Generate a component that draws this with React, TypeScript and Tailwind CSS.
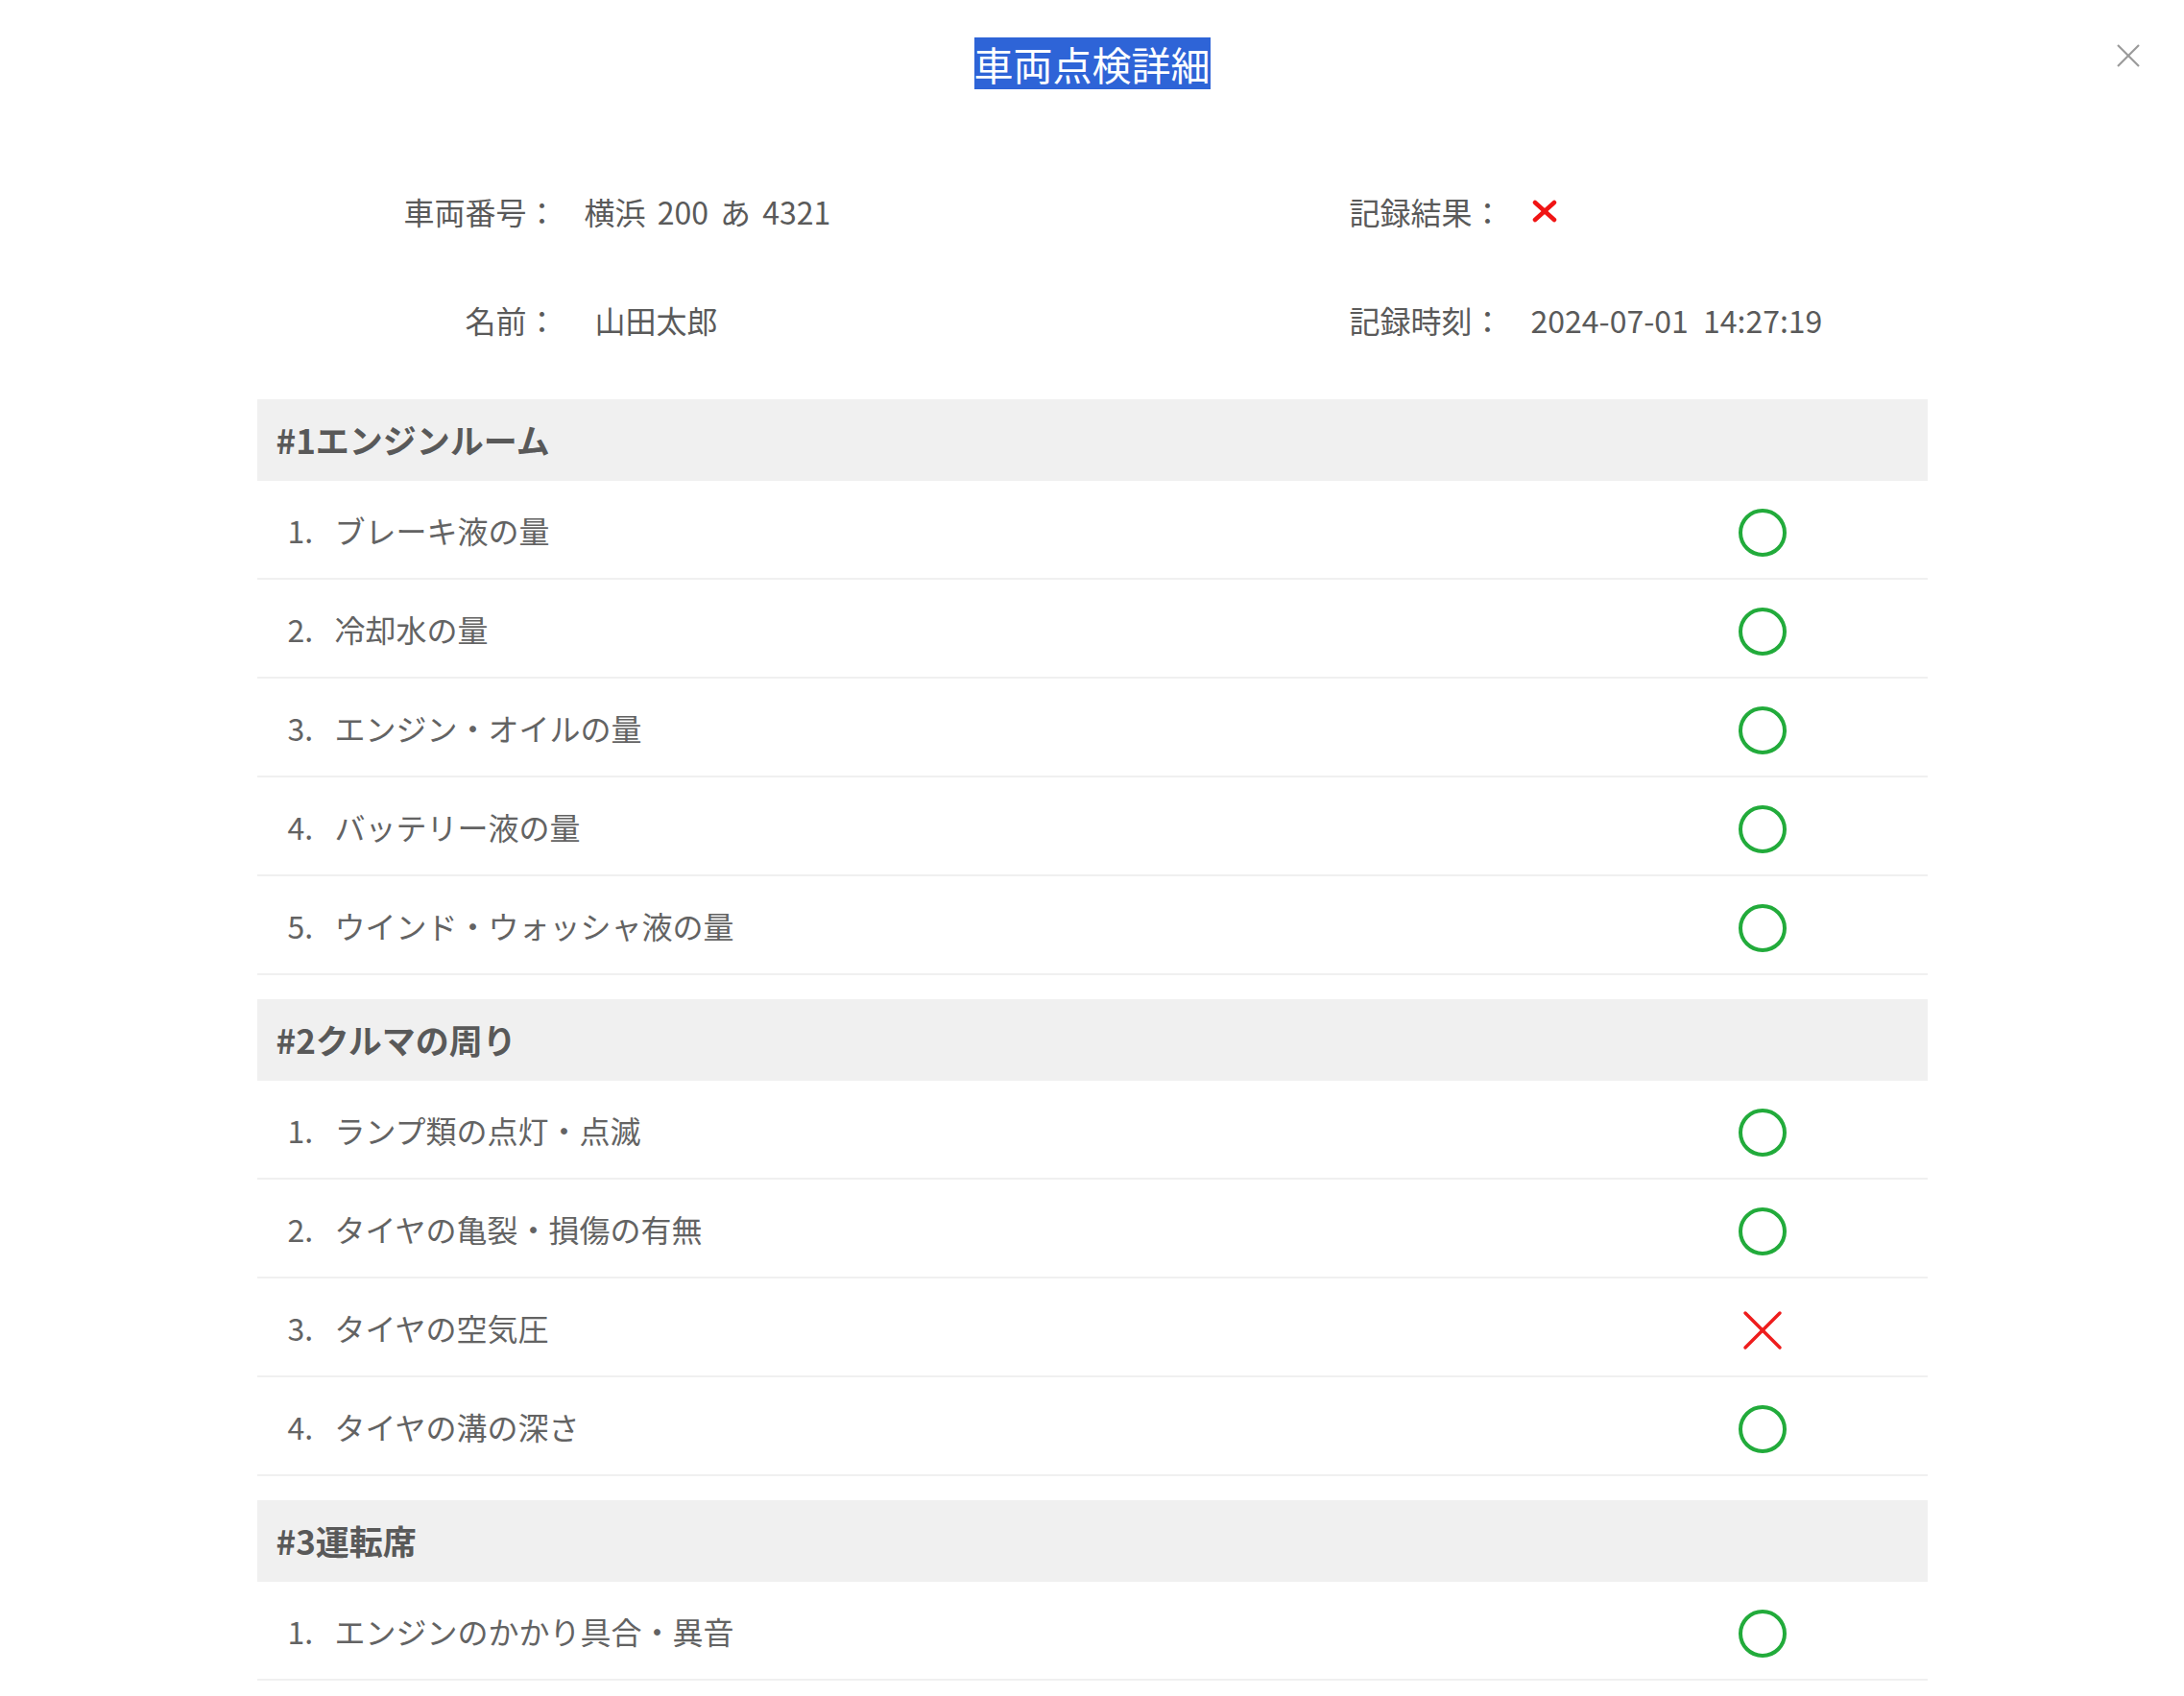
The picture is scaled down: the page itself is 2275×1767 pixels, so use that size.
import React from "react";

type CheckItem = {
  label: string;
  ok: boolean;
};

type Section = {
  title: string;
  items: CheckItem[];
};

const sections: Section[] = [
  {
    title: "#1エンジンルーム",
    items: [
      { label: "ブレーキ液の量", ok: true },
      { label: "冷却水の量", ok: true },
      { label: "エンジン・オイルの量", ok: true },
      { label: "バッテリー液の量", ok: true },
      { label: "ウインド・ウォッシャ液の量", ok: true },
    ],
  },
  {
    title: "#2クルマの周り",
    items: [
      { label: "ランプ類の点灯・点滅", ok: true },
      { label: "タイヤの亀裂・損傷の有無", ok: true },
      { label: "タイヤの空気圧", ok: false },
      { label: "タイヤの溝の深さ", ok: true },
    ],
  },
  {
    title: "#3運転席",
    items: [{ label: "エンジンのかかり具合・異音", ok: true }],
  },
];

const fontStack = { fontFamily: '"Noto Sans CJK JP", "Noto Sans", sans-serif' };

const OkMark = () => (
  <svg width="52" height="52" viewBox="0 0 52 52">
    <circle cx="26" cy="26" r="23" fill="none" stroke="#22ab3b" strokeWidth="4" />
  </svg>
);

const NgMark = () => (
  <svg width="42" height="42" viewBox="0 0 42 42">
    <line x1="3" y1="3" x2="39" y2="39" stroke="#ee1d1d" strokeWidth="3.5" strokeLinecap="round" />
    <line x1="39" y1="3" x2="3" y2="39" stroke="#ee1d1d" strokeWidth="3.5" strokeLinecap="round" />
  </svg>
);

const SmallNg = () => (
  <svg width="26" height="24" viewBox="0 0 26 24">
    <line x1="3" y1="3" x2="23" y2="21" stroke="#f01414" strokeWidth="4.5" strokeLinecap="round" />
    <line x1="23" y1="3" x2="3" y2="21" stroke="#f01414" strokeWidth="4.5" strokeLinecap="round" />
  </svg>
);

const CloseIcon = () => (
  <svg width="26" height="26" viewBox="0 0 26 26">
    <line x1="2" y1="2" x2="24" y2="24" stroke="#9a9a9a" strokeWidth="2.2" />
    <line x1="24" y1="2" x2="2" y2="24" stroke="#9a9a9a" strokeWidth="2.2" />
  </svg>
);

const InfoCell = ({
  label,
  labelWidth,
  children,
  offset,
}: {
  label: string;
  labelWidth: string;
  children: React.ReactNode;
  offset: string;
}) => (
  <div className="flex h-[113px] items-center">
    <span className={`${labelWidth} shrink-0 text-right`}>{label}</span>
    <span className={offset}>{children}</span>
  </div>
);

const SectionBlock = ({ section, first }: { section: Section; first: boolean }) => (
  <div className={first ? "" : "mt-[25px]"}>
    <div className="flex h-[85px] items-center bg-[#f0f0f0] pl-[20px] text-[35px] font-bold text-[#595959]">
      {section.title}
    </div>
    {section.items.map((item, index) => (
      <div
        key={index}
        className="flex h-[103px] items-center border-b-2 border-[#f0f0f0] pl-[32px] text-[32px] text-[#636363]"
      >
        <span className="w-[49px] shrink-0">{index + 1}.</span>
        <span className="flex-1">{item.label}</span>
        <span className="mr-[146px] flex w-[52px] translate-y-[3px] items-center justify-center">
          {item.ok ? <OkMark /> : <NgMark />}
        </span>
      </div>
    ))}
  </div>
);

export default function App() {
  return (
    <div className="relative min-h-screen w-full bg-white" style={fontStack}>
      <button className="absolute right-[45px] top-[45px] flex h-[26px] w-[26px] items-center justify-center">
        <CloseIcon />
      </button>

      <div className="pt-[39px] text-center">
        <span className="inline-block h-[54px] bg-[#2e64d7] text-[41px] leading-[54px] text-white">
          車両点検詳細
        </span>
      </div>

      <div className="mx-auto w-[1740px]">
        <div className="mt-[70px] grid grid-cols-2 text-[32px] text-[#5a5a5a]">
          <div>
            <InfoCell label="車両番号：" labelWidth="w-[313px]" offset="ml-[28px] [word-spacing:5px]">
              横浜 200 あ 4321
            </InfoCell>
            <InfoCell label="名前：" labelWidth="w-[313px]" offset="ml-[39px]">
              山田太郎
            </InfoCell>
          </div>
          <div className="pl-[268px]">
            <InfoCell label="記録結果：" labelWidth="w-auto" offset="ml-[30px] flex items-center">
              <SmallNg />
            </InfoCell>
            <InfoCell label="記録時刻：" labelWidth="w-auto" offset="ml-[29px] [word-spacing:8px]">
              2024-07-01 14:27:19
            </InfoCell>
          </div>
        </div>

        <div className="mt-[27px]">
          {sections.map((section, index) => (
            <SectionBlock key={index} section={section} first={index === 0} />
          ))}
        </div>
      </div>
    </div>
  );
}
